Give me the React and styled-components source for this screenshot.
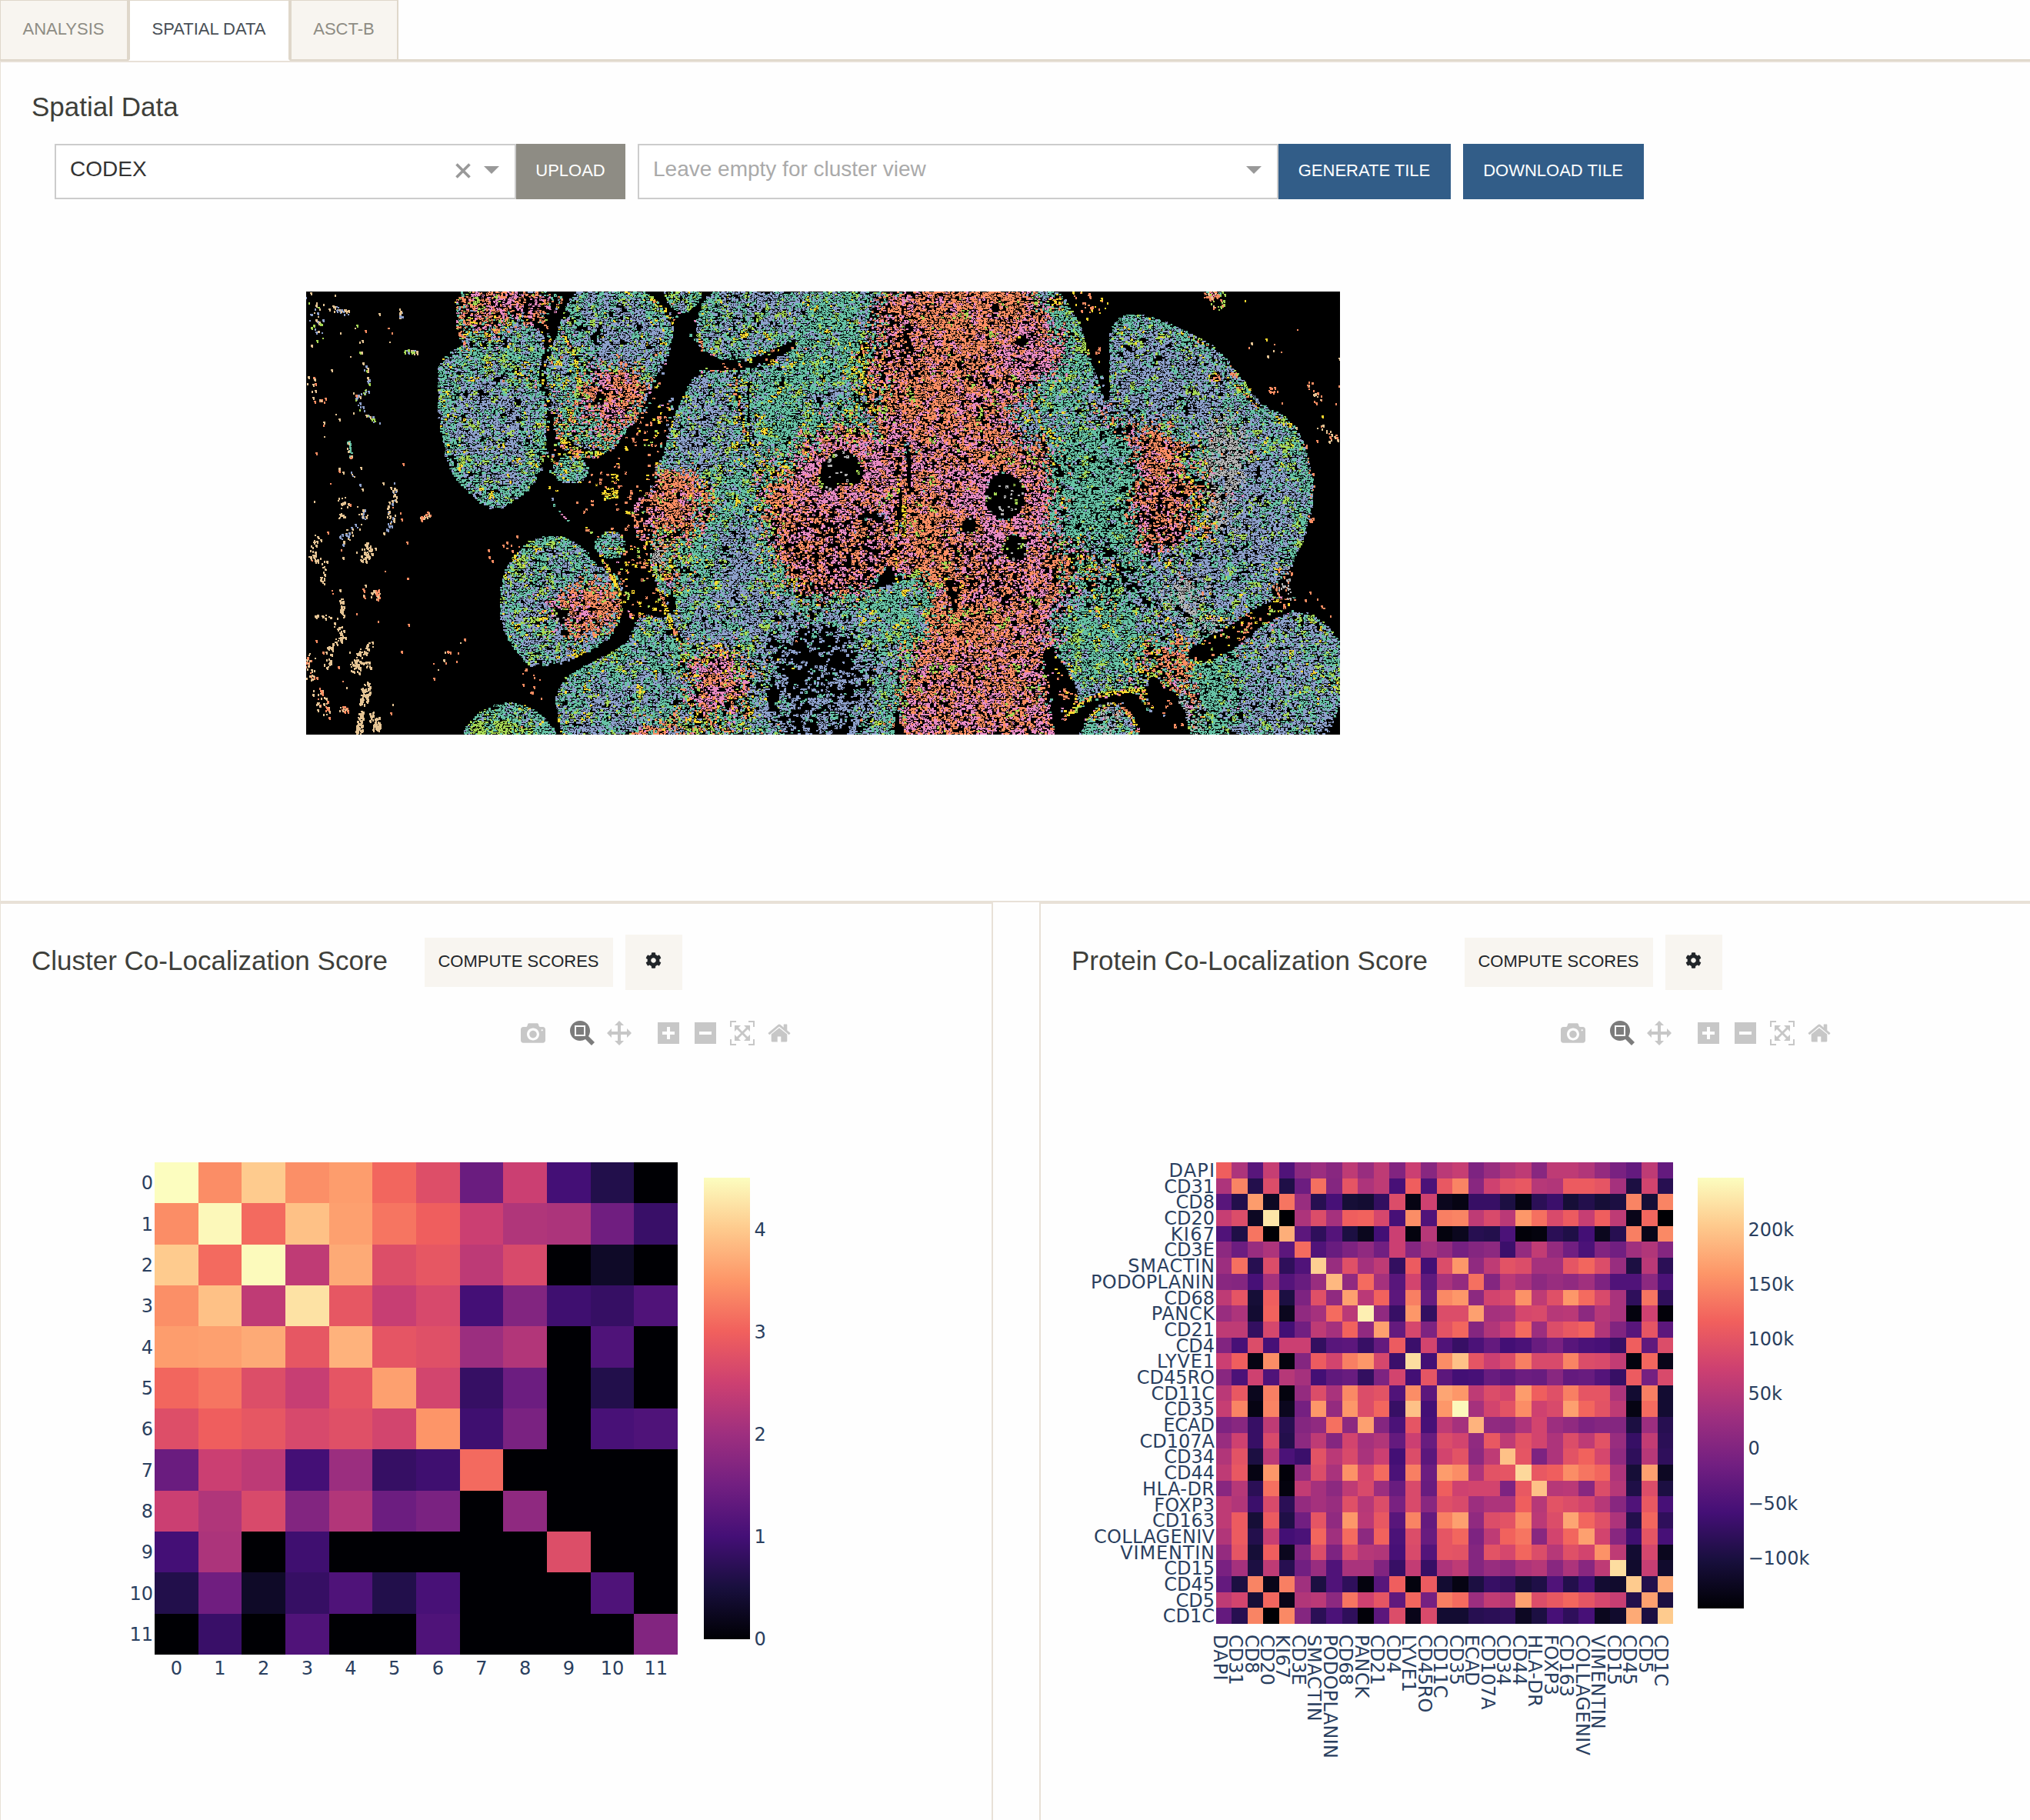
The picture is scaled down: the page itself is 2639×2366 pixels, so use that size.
import React, { useLayoutEffect, useRef } from "react";
import styled, { createGlobalStyle, css } from "styled-components";
import { FaCog } from "react-icons/fa";

const GlobalStyle = createGlobalStyle`
  * { box-sizing: border-box; }
  html, body { margin: 0; padding: 0; background: #fff; }
  body {
    font-family: "Liberation Sans", Arial, Helvetica, sans-serif;
    font-size: 28px;
    color: #3e3f3a;
  }
  button { font-family: inherit; }
`;

/* ---------- layout ---------- */

const Page = styled.div`
  width: 2639px;
  height: 2366px;
  overflow: hidden;
  background: #fefefe;
`;

const Shell = styled.div`
  width: 2645px;
  margin: -1px 0 0 -1px;
`;

const TabBar = styled.nav`
  display: flex;
  height: 80px;
  border-bottom: 2px solid #dfd7ca;
`;

const Tab = styled.button`
  width: ${(p) => p.$width}px;
  height: 80px;
  padding: 0 1px 3px 0;
  border: 2px solid #dfd7ca;
  border-bottom-color: ${(p) => (p.$active ? "#fff" : "#dfd7ca")};
  background: ${(p) => (p.$active ? "#fff" : "#f8f5f0")};
  color: ${(p) => (p.$active ? "#495057" : "#8e8c84")};
  font-size: 22px;
  text-transform: uppercase;
  white-space: nowrap;
`;

const Card = styled.section`
  width: ${(p) => p.$width}px;
  height: ${(p) => p.$height}px;
  border: 2px solid #e8e1d7;
  background: #fefefe;
`;

const CardRow = styled.div`
  display: flex;
  gap: 60px;
`;

const Title = styled.h2`
  margin: 0;
  font-size: 35px;
  line-height: 42px;
  font-weight: 400;
  color: #3e3f3a;
  white-space: nowrap;
`;

const SpatialTitle = styled(Title)`
  padding: 37px 0 0 40px;
`;

const Controls = styled.div`
  display: flex;
  height: 72px;
  margin: 27px 0 0 70px;
`;

const Select = styled.div`
  display: flex;
  align-items: center;
  width: ${(p) => p.$width}px;
  height: 72px;
  margin-left: ${(p) => p.$offset || 0}px;
  padding: 0 20px 0 18px;
  border: 2px solid #ccc;
  background: #fff;
`;

const SelectText = styled.span`
  flex: 1;
  padding-bottom: 7px;
  font-size: 28px;
  color: ${(p) => (p.$placeholder ? "#aaa" : "#333")};
`;

const ClearIcon = styled.svg`
  width: 20px;
  height: 20px;
  margin: 0 17px 2px 0;
  fill: none;
  stroke: #999;
  stroke-width: 3.6;
`;

const Caret = styled.span`
  width: 0;
  height: 0;
  margin-bottom: 4px;
  border: 10px solid transparent;
  border-top-color: #999;
  border-bottom-width: 0;
`;

const buttonTone = {
  secondary: css`background: #8e8c84; color: #fff;`,
  primary: css`background: #325d88; color: #fff;`,
  light: css`background: #f8f5f0; color: #212529;`,
};

const Button = styled.button`
  display: flex;
  align-items: center;
  justify-content: center;
  width: ${(p) => p.$width}px;
  height: ${(p) => p.$height || 72}px;
  margin-left: ${(p) => p.$offset || 0}px;
  padding: 0 1px ${(p) => p.$lift || 3}px 0;
  border: 0;
  font-size: 22px;
  text-transform: uppercase;
  white-space: nowrap;
  ${(p) => buttonTone[p.$tone]}
`;

const TissueCanvas = styled.canvas`
  display: block;
  width: 1344px;
  height: 576px;
  margin: 120px 0 0 397px;
  background: #000;
`;

const ScoreHeader = styled.header`
  display: flex;
  align-items: center;
  height: 72px;
  margin: 40px 0 0 40px;
`;

const ScoreTitle = styled(Title)`
  width: 511px;
  padding-bottom: 5px;
`;

const ModeBar = styled.div`
  display: flex;
  gap: 32px;
  margin: 40px 0 0 676px;
`;

const ModeGroup = styled.div`
  display: flex;
  gap: 16px;
`;

const ModeIcon = styled.svg`
  display: block;
  width: 32px;
  height: 32px;
  fill: ${(p) => (p.$active ? "#7c7c7c" : "#c7c7c7")};
`;

const Chart = styled.svg`
  display: block;
  width: 1286px;
  height: 1000px;
  font-family: "DejaVu Sans", Verdana, sans-serif;
  font-size: 24px;
  fill: #2a3f5f;
`;

/* ---------- tissue image ---------- */

const COLORS = {
  T: "#66c2a5", O: "#fc8d62", B: "#8da0cb", P: "#e78ac3",
  L: "#a6d854", Y: "#ffd92f", N: "#e5c494", G: "#b3b3b3",
};

/* fill: share of the area covered by cells; clump: how much the gaps cluster */
const TISSUE = {
  none: { fill: 0, clump: 0, mix: "N" },
  follicle: { fill: 0.83, clump: 0.75, mix: "TTTTTTBBBBBBLLTTTTTTBBBBBLYBB" },
  blue: { fill: 0.8, clump: 0.8, mix: "BBBBBBBBBTTBBBBBBBTTLL" },
  teal: { fill: 0.9, clump: 0.7, mix: "TTTTTTTTTTBLLBTTTTTTTTTTLBBY" },
  orange: { fill: 0.78, clump: 0.4, mix: "OOOOOOOOPPOOOOOOOPL" },
  pink: { fill: 0.76, clump: 0.4, mix: "PPPPPPPOOO" },
  warm: { fill: 0.7, clump: 0.4, mix: "OOOOOPPPPPOOOOOPPPPL" },
  darkWarm: { fill: 0.54, clump: 0.4, mix: "OOOOOPPPP" },
  edge: { fill: 0.72, clump: 0.4, mix: "TTTTOOOLLYYBP" },
  stroma: { fill: 0.26, clump: 0.5, mix: "OOOOOYYYL" },
  sparse: { fill: 0.12, clump: 0.5, mix: "OOOOOOOY" },
  yellow: { fill: 0.66, clump: 0.4, mix: "YYYYYOLO" },
  gray: { fill: 0.84, clump: 0.4, mix: "GGGGGGGGTB" },
  darkTeal: { fill: 0.74, clump: 0.55, mix: "TTTTTTTTTTTTBTTTL" },
  darkBlue: { fill: 0.5, clump: 0.7, mix: "BBBBBBBTTBBB" },
  deepBlue: { fill: 0.3, clump: 0.7, mix: "BBBBBBBT" },
  green: { fill: 0.9, clump: 0.6, mix: "LLLLLLT" },
  hole: { fill: 0.03, clump: 0, mix: "GL" },
};
const TISSUE_KEYS = Object.keys(TISSUE);
const CRISP = new Set(["hole", "yellow", "stroma", "sparse", "green"]);
const LOOSE = new Set(["none", "hole", "stroma", "sparse", "yellow"]);

const LEFT = [1 / 2.24, 0, 0, 1 / 2.57, -18, -19];
const RIGHT = [1 / 2.24, 0, 0, 1 / 2.57, 662, -19];

/* [field, kind, shape, geometry, line width] painted back to front */
const REGIONS = [
  [LEFT, "stroma", "area", [735, 420, 760, 600, 880, 600, 1000, 480, 1120, 330, 1100, 480, 1050, 620, 1060, 900, 1110, 1180, 980, 1180, 940, 900, 880, 860, 800, 820, 745, 740]],
  [LEFT, "sparse", "area", [770, 660, 850, 610, 1000, 520, 1040, 600, 1010, 820, 900, 860, 780, 800]],
  [LEFT, "sparse", "area", [1110, 110, 1180, 120, 1170, 260, 1130, 350, 1060, 480, 1020, 460, 1090, 300]],
  [LEFT, "none", "area", [1100, 150, 1180, 200, 1200, 300, 1150, 330, 1090, 440, 1040, 420, 1090, 300]],
  [LEFT, "stroma", "line", [1190, 300, 1300, 300, 1420, 250, 1520, 185], 30],
  [LEFT, "edge", "area", [470, 49, 800, 49, 770, 110, 735, 160, 690, 150, 610, 185, 560, 205, 485, 235, 478, 130]],
  [LEFT, "warm", "area", [485, 30, 680, 30, 700, 110, 620, 150, 530, 150, 490, 110]],
  [LEFT, "darkWarm", "area", [640, 60, 780, 60, 750, 140, 640, 150]],
  [LEFT, "follicle", "area", [425, 290, 475, 235, 560, 200, 620, 180, 690, 145, 740, 195, 735, 260, 722, 330, 738, 420, 742, 560, 728, 630, 703, 695, 652, 745, 595, 782, 542, 755, 497, 703, 456, 642, 436, 540, 421, 430, 421, 340]],
  [LEFT, "teal", "line", [450, 290, 438, 430, 455, 540, 475, 630, 515, 700, 560, 745, 600, 757, 650, 725, 695, 665, 720, 600, 724, 450], 30],
  [LEFT, "teal", "area", [470, 250, 600, 200, 700, 300, 720, 380, 600, 300, 480, 300]],
  [LEFT, "blue", "oval", [590, 460, 110, 120]],
  [LEFT, "yellow", "line", [640, 310, 700, 350], 7],
  [LEFT, "follicle", "area", [780, 130, 830, 30, 1020, 30, 1080, 110, 1115, 180, 1095, 260, 1055, 340, 1035, 400, 995, 480, 930, 575, 880, 610, 820, 600, 770, 565, 760, 480, 742, 420, 736, 340, 750, 250, 775, 180]],
  [LEFT, "blue", "oval", [950, 180, 100, 90]],
  [LEFT, "teal", "line", [900, 60, 1010, 60, 1085, 160], 24],
  [LEFT, "orange", "area", [850, 320, 920, 280, 1010, 310, 1035, 370, 1010, 440, 930, 550, 880, 540, 850, 480, 840, 400]],
  [LEFT, "pink", "oval", [905, 460, 50, 40]],
  [LEFT, "pink", "oval", [910, 330, 40, 34]],
  [LEFT, "edge", "area", [760, 420, 850, 450, 900, 540, 900, 600, 820, 600, 765, 560]],
  [LEFT, "teal", "oval", [850, 520, 40, 40]],
  [LEFT, "yellow", "line", [780, 540, 830, 580, 900, 590], 14],
  [LEFT, "yellow", "line", [790, 190, 825, 270, 838, 400], 12],
  [LEFT, "none", "line", [780, 90, 835, 180, 850, 150], 8],
  [LEFT, "none", "line", [770, 60, 745, 150, 742, 220, 724, 330, 745, 420, 755, 540, 745, 640], 14],
  [LEFT, "yellow", "line", [735, 140, 750, 220, 728, 340, 748, 450], 5],
  [LEFT, "hole", "oval", [895, 405, 16, 24]],
  [LEFT, "follicle", "oval", [810, 645, 50, 46]],
  [LEFT, "teal", "oval", [810, 645, 44, 40]],
  [LEFT, "yellow", "oval", [925, 725, 22, 20]],
  [LEFT, "yellow", "oval", [935, 672, 15, 14]],
  [LEFT, "yellow", "line", [970, 575, 1005, 520], 8],
  [LEFT, "teal", "area", [1080, 30, 1200, 30, 1170, 110, 1130, 120, 1090, 90]],
  [LEFT, "yellow", "line", [1040, 70, 1085, 110, 1105, 150], 12],
  [LEFT, "follicle", "area", [1215, 20, 1640, 20, 1600, 110, 1510, 170, 1420, 232, 1330, 276, 1240, 278, 1180, 235, 1170, 160]],
  [LEFT, "blue", "area", [1230, 50, 1500, 60, 1480, 130, 1380, 180, 1240, 170]],
  [LEFT, "yellow", "line", [1182, 190, 1195, 240], 12],
  [LEFT, "follicle", "area", [1180, 320, 1300, 315, 1400, 285, 1520, 200, 1620, 120, 1640, 1600, 800, 1600, 770, 1460, 765, 1400, 790, 1340, 850, 1300, 940, 1250, 990, 1200, 1010, 1120, 1110, 1150, 1120, 1050, 1040, 1000, 1050, 880, 1030, 800, 1050, 660, 1080, 600, 1090, 530, 1120, 440, 1150, 370]],
  [LEFT, "blue", "area", [1150, 420, 1200, 340, 1270, 400, 1280, 680, 1200, 660, 1140, 590]],
  [LEFT, "teal", "area", [1180, 720, 1260, 680, 1340, 560, 1340, 820, 1300, 900, 1200, 1000, 1130, 960]],
  [LEFT, "blue", "area", [1230, 820, 1340, 780, 1370, 980, 1330, 1160, 1240, 1130, 1220, 950]],
  [LEFT, "teal", "area", [1340, 330, 1600, 150, 1620, 480, 1500, 590, 1380, 600, 1345, 520]],
  [LEFT, "edge", "area", [1040, 640, 1200, 640, 1200, 800, 1130, 900, 1100, 1100, 1040, 1000]],
  [LEFT, "orange", "oval", [1115, 750, 74, 110]],
  [LEFT, "gray", "oval", [1065, 930, 18, 36]],
  [LEFT, "darkWarm", "area", [980, 760, 1050, 700, 1060, 860, 1010, 900]],
  [LEFT, "yellow", "line", [1290, 330, 1300, 430, 1325, 540, 1360, 600], 10],
  [LEFT, "none", "line", [1330, 330, 1328, 480, 1350, 570], 5],
  [LEFT, "yellow", "line", [1075, 1060, 1095, 1140, 1130, 1220], 14],
  [LEFT, "edge", "area", [1350, 640, 1450, 580, 1640, 540, 1640, 1090, 1440, 1080, 1370, 900]],
  [LEFT, "orange", "area", [1370, 680, 1640, 560, 1640, 1060, 1460, 1050, 1400, 900]],
  [LEFT, "darkWarm", "area", [1400, 820, 1480, 760, 1640, 760, 1640, 1070, 1500, 1070, 1430, 960]],
  [LEFT, "teal", "line", [800, 1400, 860, 1330, 960, 1270, 1040, 1190], 44],
  [LEFT, "edge", "area", [1130, 1220, 1330, 1230, 1350, 1528, 1140, 1528]],
  [LEFT, "pink", "oval", [1230, 1350, 68, 100]],
  [LEFT, "darkBlue", "area", [1380, 1100, 1640, 1170, 1640, 1600, 1430, 1540, 1350, 1350]],
  [LEFT, "deepBlue", "area", [1470, 1210, 1640, 1220, 1640, 1400, 1500, 1370]],
  [LEFT, "orange", "oval", [1065, 1520, 70, 26]],
  [LEFT, "follicle", "area", [602, 1100, 612, 995, 645, 925, 700, 872, 790, 862, 845, 905, 893, 975, 945, 985, 965, 1060, 955, 1155, 903, 1225, 822, 1277, 720, 1306, 676, 1292, 634, 1224, 608, 1170]],
  [LEFT, "teal", "line", [640, 1000, 700, 900, 780, 885, 840, 950], 36],
  [LEFT, "teal", "line", [670, 1250, 720, 1280, 820, 1250], 20],
  [LEFT, "orange", "area", [770, 1060, 880, 980, 945, 1050, 940, 1150, 890, 1210, 800, 1200, 750, 1120]],
  [LEFT, "pink", "oval", [790, 1115, 44, 50]],
  [LEFT, "hole", "oval", [782, 1125, 26, 26]],
  [LEFT, "hole", "oval", [795, 1190, 16, 12]],
  [LEFT, "follicle", "oval", [925, 895, 44, 46]],
  [LEFT, "yellow", "line", [900, 930, 935, 1010, 965, 1090], 14],
  [LEFT, "teal", "area", [480, 1600, 490, 1528, 540, 1450, 630, 1418, 705, 1440, 775, 1528, 790, 1600]],
  [LEFT, "green", "oval", [600, 1515, 76, 30]],

  [RIGHT, "follicle", "area", [-60, 20, 700, 20, 740, 110, 770, 150, 800, 280, 840, 420, 860, 430, 852, 200, 875, 135, 930, 118, 1045, 160, 1158, 225, 1208, 286, 1256, 366, 1296, 425, 1378, 472, 1426, 555, 1452, 700, 1436, 832, 1404, 924, 1362, 1002, 1310, 1060, 1380, 1075, 1380, 1120, 1460, 1135, 1560, 1260, 1560, 1360, 1480, 1540, 1480, 1600, 400, 1600, 400, 1000, 200, 900, 100, 500, -60, 300]],
  [RIGHT, "teal", "area", [-60, 49, 140, 30, 130, 300, 170, 430, 60, 500, -60, 480]],
  [RIGHT, "blue", "oval", [30, 400, 50, 60]],
  [RIGHT, "edge", "area", [110, 200, 200, 180, 230, 420, 170, 560, 100, 520]],
  [RIGHT, "warm", "area", [150, 20, 680, 20, 745, 260, 620, 350, 560, 480, 640, 560, 690, 650, 700, 850, 680, 1100, 700, 1200, 640, 1600, 230, 1600, 250, 1200, 370, 1100, 370, 1040, 240, 1000, 200, 950, 170, 560, 190, 350]],
  [RIGHT, "orange", "area", [240, 49, 540, 20, 520, 180, 440, 280, 420, 480, 230, 500, 220, 350, 260, 230]],
  [RIGHT, "orange", "area", [340, 40, 640, 20, 640, 110, 480, 200, 360, 120]],
  [RIGHT, "pink", "area", [560, 160, 700, 200, 745, 270, 620, 350, 540, 260]],
  [RIGHT, "darkWarm", "area", [160, 60, 240, 60, 350, 320, 230, 330, 180, 200]],
  [RIGHT, "edge", "area", [-40, 480, 170, 460, 200, 560, -40, 560]],
  [RIGHT, "pink", "area", [-60, 560, 120, 500, 240, 600, 240, 760, 60, 820, -80, 760]],
  [RIGHT, "darkWarm", "area", [-80, 780, 60, 790, 230, 820, 190, 1060, -60, 1090]],
  [RIGHT, "teal", "area", [-40, 1110, 60, 1060, 200, 1040, 260, 1000, 370, 1040, 360, 1190, 240, 1210, 230, 1600, 160, 1600, 120, 1170]],
  [RIGHT, "follicle", "area", [-80, 1120, 140, 1090, 240, 1180, 200, 1360, 170, 1600, -80, 1600]],
  [RIGHT, "darkBlue", "area", [-80, 1160, 100, 1160, 170, 1260, 150, 1460, 100, 1600, -80, 1600]],
  [RIGHT, "deepBlue", "area", [-80, 1190, 70, 1180, 130, 1270, 40, 1360, -80, 1370]],
  [RIGHT, "orange", "area", [260, 780, 400, 600, 470, 900, 520, 1100, 620, 1180, 300, 1300, 360, 1060, 270, 960]],
  [RIGHT, "pink", "area", [380, 640, 480, 560, 640, 640, 690, 760, 690, 1060, 600, 1000, 480, 930, 380, 800]],
  [RIGHT, "orange", "oval", [530, 600, 80, 50]],
  [RIGHT, "darkWarm", "area", [340, 850, 460, 900, 640, 1060, 600, 1120, 460, 1080, 400, 980]],
  [RIGHT, "orange", "oval", [590, 1380, 80, 110]],
  [RIGHT, "pink", "oval", [640, 1250, 40, 80]],
  [RIGHT, "teal", "area", [640, 60, 720, 90, 775, 180, 800, 290, 850, 440, 700, 480, 620, 420, 660, 330, 745, 260]],
  [RIGHT, "yellow", "oval", [700, 80, 20, 20]],
  [RIGHT, "blue", "area", [740, 330, 790, 300, 840, 430, 790, 480]],
  [RIGHT, "darkTeal", "area", [680, 500, 900, 470, 930, 700, 900, 850, 960, 950, 960, 1150, 720, 1150, 720, 900, 690, 700]],
  [RIGHT, "darkWarm", "area", [640, 860, 720, 860, 740, 1080, 680, 1140]],
  [RIGHT, "edge", "area", [700, 880, 820, 900, 880, 1080, 760, 1110]],
  [RIGHT, "darkWarm", "area", [900, 480, 990, 470, 1080, 640, 1120, 800, 1040, 930, 900, 900, 930, 720]],
  [RIGHT, "orange", "oval", [1000, 600, 52, 110]],
  [RIGHT, "edge", "area", [1040, 500, 1130, 600, 1150, 860, 1060, 900, 1090, 700]],
  [RIGHT, "none", "line", [650, 520, 680, 600, 720, 660], 10],
  [RIGHT, "yellow", "line", [645, 360, 640, 430, 665, 540, 690, 620, 725, 780], 6],
  [RIGHT, "darkBlue", "line", [790, 900, 900, 1000, 960, 1080], 40],
  [RIGHT, "blue", "area", [890, 200, 950, 150, 1080, 220, 1180, 300, 1220, 400, 1180, 490, 1060, 480, 920, 470, 870, 380]],
  [RIGHT, "blue", "area", [1220, 620, 1290, 560, 1390, 640, 1410, 780, 1370, 920, 1270, 1030, 1180, 960, 1160, 860]],
  [RIGHT, "teal", "line", [880, 160, 930, 140, 1040, 180, 1140, 240, 1190, 300], 20],
  [RIGHT, "teal", "line", [1290, 450, 1360, 490, 1410, 580, 1430, 700, 1415, 820, 1380, 920], 34],
  [RIGHT, "yellow", "line", [1090, 200, 1150, 235], 8],
  [RIGHT, "yellow", "line", [1225, 360, 1285, 430], 10],
  [RIGHT, "yellow", "oval", [1165, 335, 12, 20]],
  [RIGHT, "gray", "area", [1130, 460, 1165, 470, 1250, 540, 1240, 620, 1205, 740, 1205, 870, 1150, 830, 1135, 600]],
  [RIGHT, "blue", "area", [980, 1000, 1080, 880, 1200, 900, 1200, 1050, 1080, 1080, 980, 1100]],
  [RIGHT, "gray", "oval", [1070, 1060, 50, 60]],
  [RIGHT, "gray", "oval", [1150, 1150, 40, 20]],
  [RIGHT, "teal", "oval", [840, 1220, 130, 120]],
  [RIGHT, "edge", "area", [890, 1320, 970, 1200, 1090, 1190, 1100, 1400, 1150, 1600, 1040, 1600, 960, 1380]],
  [RIGHT, "orange", "area", [970, 1210, 1070, 1210, 1090, 1380, 1040, 1350, 980, 1280]],
  [RIGHT, "none", "area", [970, 1320, 1010, 1350, 1050, 1450, 1100, 1600, 940, 1600, 960, 1420]],
  [RIGHT, "sparse", "area", [1000, 1340, 1060, 1400, 1110, 1600, 1030, 1600]],
  [RIGHT, "darkTeal", "area", [1100, 1220, 1240, 1220, 1220, 1400, 1200, 1600, 1110, 1600]],
  [RIGHT, "stroma", "area", [1060, 1250, 1200, 1170, 1310, 1080, 1400, 1060, 1400, 1120, 1310, 1150, 1230, 1240, 1120, 1300]],
  [RIGHT, "gray", "line", [1060, 1330, 1080, 1440, 1100, 1528], 14],
  [RIGHT, "blue", "area", [1250, 1250, 1330, 1150, 1425, 1108, 1510, 1175, 1535, 1280, 1500, 1440, 1470, 1600, 1200, 1600, 1220, 1400]],
  [RIGHT, "follicle", "oval", [1450, 1320, 80, 150]],
  [RIGHT, "none", "area", [660, 1230, 700, 1240, 720, 1360, 760, 1430, 860, 1390, 940, 1390, 980, 1440, 1010, 1600, 640, 1600]],
  [RIGHT, "warm", "area", [560, 1230, 650, 1200, 670, 1400, 690, 1480, 700, 1600, 540, 1600]],
  [RIGHT, "stroma", "area", [655, 1230, 690, 1240, 750, 1340, 770, 1420, 720, 1500, 680, 1420]],
  [RIGHT, "none", "line", [690, 1340, 705, 1460], 30],
  [RIGHT, "yellow", "line", [740, 1460, 790, 1410, 860, 1390, 940, 1380, 975, 1440], 14],
  [RIGHT, "teal", "area", [740, 1600, 790, 1480, 820, 1440, 880, 1424, 915, 1450, 940, 1520, 960, 1600]],
  [RIGHT, "gray", "oval", [850, 1465, 50, 24]],
  [RIGHT, "yellow", "line", [790, 1480, 830, 1436, 885, 1425, 920, 1470, 945, 1540], 10],
  [RIGHT, "none", "line", [270, 560, 272, 720], 10],
  [RIGHT, "none", "line", [245, 700, 240, 850], 14],
  [RIGHT, "yellow", "line", [256, 740, 256, 860], 14],
  [RIGHT, "yellow", "line", [236, 540, 242, 700, 232, 860, 236, 1010], 4],
  [RIGHT, "yellow", "line", [135, 210, 142, 340, 160, 440], 8],
  [RIGHT, "hole", "area", [25, 620, 50, 580, 90, 575, 125, 610, 138, 660, 130, 695, 70, 690, 50, 715, 0, 705]],
  [RIGHT, "hole", "oval", [550, 732, 60, 78]],
  [RIGHT, "hole", "oval", [445, 830, 24, 30]],
  [RIGHT, "hole", "oval", [580, 905, 38, 44]],
  [RIGHT, "hole", "oval", [600, 215, 22, 18]],
  [RIGHT, "darkWarm", "oval", [335, 90, 34, 34]],
  [RIGHT, "hole", "oval", [525, 98, 10, 14]],
  [RIGHT, "none", "line", [385, 1010, 405, 1110], 18],
  [RIGHT, "yellow", "line", [355, 1000, 430, 1030, 410, 1060], 8],
  [RIGHT, "stroma", "line", [820, 240, 825, 340, 850, 430], 14],
  [RIGHT, "darkWarm", "line", [845, 430, 880, 500], 30],
  [RIGHT, "orange", "oval", [1152, 60, 28, 12]],
];

/* speckled debris trails: field, colours, spread, count, polyline */
const TRAILS = [
  [LEFT, "NNBL", 16, 26, [50, 60, 80, 200]],
  [LEFT, "NB", 8, 18, [110, 95, 155, 120]],
  [LEFT, "NBL", 7, 44, [185, 160, 215, 300, 220, 380, 185, 400, 210, 460, 250, 480]],
  [LEFT, "NO", 10, 14, [50, 330, 60, 400, 100, 420]],
  [LEFT, "NT", 4, 18, [160, 545, 170, 605]],
  [LEFT, "NB", 10, 40, [180, 640, 200, 780, 210, 810, 170, 850, 140, 885]],
  [LEFT, "N", 10, 18, [140, 740, 150, 765, 135, 820]],
  [LEFT, "NN", 8, 40, [75, 850, 55, 930, 95, 960, 85, 1025]],
  [LEFT, "BN", 7, 34, [290, 690, 298, 740, 275, 780, 290, 810, 262, 870]],
  [LEFT, "N", 11, 34, [228, 895, 205, 945]],
  [LEFT, "NO", 6, 22, [212, 1015, 210, 1070, 246, 1040, 250, 1070]],
  [LEFT, "N", 5, 26, [143, 1070, 143, 1135, 60, 1130]],
  [LEFT, "N", 8, 48, [130, 1160, 145, 1210, 105, 1235, 100, 1310]],
  [LEFT, "N", 12, 60, [230, 1225, 190, 1260, 180, 1310, 220, 1290]],
  [LEFT, "N", 10, 54, [215, 1360, 205, 1420]],
  [LEFT, "NNO", 14, 60, [50, 1260, 45, 1290, 60, 1360, 85, 1420, 90, 1460]],
  [LEFT, "N", 7, 54, [200, 1450, 190, 1525]],
  [LEFT, "N", 9, 40, [225, 1460, 250, 1490, 240, 1510]],
  [LEFT, "NO", 8, 12, [140, 1440, 160, 1440]],
  [LEFT, "BNL", 4, 14, [325, 245, 358, 248]],
  [LEFT, "NB", 4, 8, [312, 100, 316, 140]],
  [LEFT, "NO", 5, 14, [365, 810, 402, 788]],
  [LEFT, "ON", 30, 10, [390, 1370, 460, 1280, 480, 1240]],
  [LEFT, "O", 24, 10, [570, 940, 620, 880, 650, 900]],
  [LEFT, "O", 20, 10, [680, 1310, 720, 1410]],
  [LEFT, "NO", 120, 60, [150, 100, 200, 800, 200, 1500]],
  [RIGHT, "OOY", 30, 24, [760, 60, 840, 120]],
  [RIGHT, "ONL", 14, 22, [1130, 55, 1180, 60, 1160, 105]],
  [RIGHT, "ON", 10, 14, [1440, 350, 1450, 380, 1462, 410]],
  [RIGHT, "NO", 14, 18, [1470, 500, 1505, 530, 1505, 550]],
  [RIGHT, "O", 8, 8, [1320, 370, 1340, 380]],
  [RIGHT, "O", 6, 6, [1220, 330, 1205, 300]],
  [RIGHT, "ONY", 90, 14, [1250, 140, 1400, 260, 1480, 480]],
  [RIGHT, "OG", 24, 30, [1370, 980, 1350, 1040, 1380, 1060]],
  [RIGHT, "O", 8, 16, [1425, 560, 1448, 700, 1440, 820]],
  [RIGHT, "O", 14, 6, [1520, 1135, 1430, 1060]],
];

const hash = (x, y, s) => {
  let h = Math.imul(x | 0, 374761393) ^ Math.imul(y | 0, 668265263) ^ Math.imul(s, 1274126177);
  h = Math.imul(h ^ (h >>> 13), 1103515245);
  h = Math.imul(h ^ (h >>> 15), 2246822519);
  return ((h ^ (h >>> 16)) >>> 0) / 4294967296;
};

const smoothNoise = (x, y, s) => {
  const x0 = Math.floor(x), y0 = Math.floor(y);
  const u = x - x0, v = y - y0;
  const a = hash(x0, y0, s), b = hash(x0 + 1, y0, s);
  const c = hash(x0, y0 + 1, s), d = hash(x0 + 1, y0 + 1, s);
  return a + (b - a) * u + (c - a) * v + (a - b - c + d) * u * v;
};

const tracePath = (ctx, pts, closed) => {
  const n = pts.length / 2;
  const at = (i) => [pts[(i % n) * 2], pts[(i % n) * 2 + 1]];
  ctx.beginPath();
  if (!closed) {
    ctx.moveTo(...at(0));
    for (let i = 1; i < n; i++) ctx.lineTo(...at(i));
    return;
  }
  const mid = (i) => {
    const [ax, ay] = at(i), [bx, by] = at(i + 1);
    return [(ax + bx) / 2, (ay + by) / 2];
  };
  ctx.moveTo(...mid(0));
  for (let i = 1; i <= n; i++) ctx.quadraticCurveTo(...at(i), ...mid(i));
  ctx.closePath();
};

const regionMap = (w, h) => {
  const map = document.createElement("canvas");
  map.width = w;
  map.height = h;
  const ctx = map.getContext("2d", { willReadFrequently: true });
  ctx.lineJoin = "round";
  ctx.lineCap = "round";
  ctx.fillStyle = "#000";
  ctx.fillRect(0, 0, w, h);
  REGIONS.forEach(([field, kind, shape, geo, width]) => {
    const tone = `rgb(${TISSUE_KEYS.indexOf(kind) * 10},0,0)`;
    ctx.setTransform(...field);
    ctx.fillStyle = tone;
    ctx.strokeStyle = tone;
    if (shape === "oval") {
      ctx.beginPath();
      ctx.ellipse(geo[0], geo[1], geo[2], geo[3], 0, 0, Math.PI * 2);
      ctx.fill();
    } else if (shape === "area") {
      tracePath(ctx, geo, true);
      ctx.fill();
    } else {
      ctx.lineWidth = width;
      tracePath(ctx, geo, false);
      ctx.stroke();
    }
  });
  return ctx.getImageData(0, 0, w, h).data;
};

const paintTissue = (canvas) => {
  const w = canvas.width, h = canvas.height;
  const ctx = canvas.getContext("2d");
  ctx.setTransform(1, 0, 0, 1, 0, 0);
  ctx.fillStyle = "#000";
  ctx.fillRect(0, 0, w, h);
  const map = regionMap(w, h);
  const kindAt = (x, y) => {
    const cx = Math.max(0, Math.min(w - 1, x | 0));
    const cy = Math.max(0, Math.min(h - 1, y | 0));
    return TISSUE_KEYS[Math.round(map[(cy * w + cx) * 4] / 10)] || "none";
  };
  const step = 3;
  for (let y = 0; y < h; y += step) {
    for (let x = 0; x < w; x += step) {
      const own = kindAt(x + 1, y + 1);
      if (own === "none") continue;
      let kind = own;
      if (!CRISP.has(own)) {
        const reach = 44;
        const dx = hash(x, y, 1) + hash(x, y, 14) - 1;
        const dy = hash(x, y, 2) + hash(x, y, 15) - 1;
        const wx = (smoothNoise(x / 14, y / 14, 16) - 0.5) * 26;
        const wy = (smoothNoise(x / 14, y / 14, 17) - 0.5) * 26;
        const near = kindAt(x + dx * reach * 0.5 + wx, y + dy * reach * 0.5 + wy);
        if (!LOOSE.has(near)) kind = near;
      }
      const { fill, clump, mix } = TISSUE[kind];
      /* the averaged noise is bell shaped, so steer its threshold from the coverage */
      const noise = smoothNoise(x / 5.5, y / 5.5, 3) * clump + hash(x, y, 4) * (1 - clump);
      const level = 0.5 + (fill - 0.5) * (fill > 0.5 ? 0.78 : 0.86);
      if (noise > level) continue;
      const grouped = hash(x, y, 5) < 0.62;
      const jx = Math.floor((x + hash(x, y, 6) * 5) / 9);
      const jy = Math.floor((y + hash(x, y, 7) * 5) / 9);
      const pick = grouped
        ? hash(jx, jy, 8)
        : hash(x, y, 9);
      ctx.fillStyle = COLORS[mix[Math.floor(pick * mix.length)]];
      const bw = 3 + Math.floor(hash(x, y, 10) * 1.6);
      const bh = 2 + Math.floor(hash(x, y, 11) * 2.6);
      const ox = Math.floor(hash(x, y, 12) * 1.6), oy = Math.floor(hash(x, y, 13) * 1.6);
      ctx.fillRect(x + ox, y + oy, bw, bh);
    }
  }
  ctx.fillStyle = "#000";
  for (let y = 0; y < h; y++) {
    for (let x = 0; x < w; x++) {
      if (hash(x, y, 20) < 0.12) ctx.fillRect(x, y, 1, 1);
    }
  }
  TRAILS.forEach(([field, mix, spread, count, pts], t) => {
    const segs = pts.length / 2 - 1;
    const total = Math.round(count * 1.15);
    for (let i = 0; i < total; i++) {
      const pos = hash(i, t, 35) * segs;
      const s = Math.min(segs - 1, Math.floor(pos)), f = pos - s;
      const px = pts[s * 2] + (pts[s * 2 + 2] - pts[s * 2]) * f;
      const py = pts[s * 2 + 1] + (pts[s * 2 + 3] - pts[s * 2 + 1]) * f;
      const fx = px + (hash(i, t, 30) - 0.5) * 2.4 * spread;
      const fy = py + (hash(i, t, 31) - 0.5) * 2.4 * spread;
      const x = Math.round(fx * field[0] + field[4]);
      const y = Math.round(fy * field[3] + field[5]);
      ctx.fillStyle = COLORS[mix[Math.floor(hash(i, t, 32) * mix.length)]];
      const size = hash(i, t, 33);
      ctx.fillRect(x, y, 2 + Math.floor(size * 2), 2 + Math.floor(hash(i, t, 34) * 2));
      if (size > 0.55) ctx.fillRect(x + 1, y + 2, 2, 2);
    }
  });
};

function TissueImage() {
  const ref = useRef(null);
  useLayoutEffect(() => paintTissue(ref.current), []);
  return <TissueCanvas ref={ref} width={1344} height={576} />;
}

/* ---------- heatmaps ---------- */

const MAGMA = [
  [0, 0, 4], [24, 15, 61], [68, 15, 118], [114, 31, 129], [158, 47, 127],
  [205, 64, 113], [241, 96, 93], [253, 150, 104], [254, 202, 141], [252, 253, 191],
];

const magma = (t) => {
  const p = Math.max(0, Math.min(1, t)) * 9;
  const i = Math.min(8, Math.floor(p));
  const f = p - i;
  const c = MAGMA[i].map((v, k) => Math.round(v + (MAGMA[i + 1][k] - v) * f));
  return `rgb(${c.join(",")})`;
};

/* each row lists the values from the diagonal to the last column */
const CLUSTER_SCORES = [
  [4.51, 3.42, 4.02, 3.44, 3.58, 3.06, 2.73, 1.42, 2.48, 1.0, 0.62, 0],
  [4.46, 3.1, 3.92, 3.6, 3.2, 2.98, 2.48, 2.2, 2.15, 1.48, 0.88],
  [4.48, 2.36, 3.7, 2.72, 2.86, 2.34, 2.66, 0, 0.32, 0],
  [4.24, 2.86, 2.44, 2.64, 1.0, 1.68, 0.95, 0.84, 1.13],
  [3.78, 2.84, 2.76, 1.97, 2.22, 0, 1.12, 0],
  [3.6, 2.58, 0.84, 1.44, 0, 0.62, 0],
  [3.5, 0.95, 1.6, 0, 1.05, 1.12],
  [3.1, 0, 0, 0, 0],
  [1.83, 0, 0, 0],
  [2.72, 0, 0],
  [1.12, 0],
  [1.68],
];

const PROTEIN_SCORES = [
  [66, 48, 27, 54, 25, 40, 44, 39, 52, 43, 52, 37, 55, 39, 51, 54, 36, 43, 49, 52, 39, 52, 52, 49, 42, 35, 30, 52, 30],
  [74, 14, 60, 13, 32, 70, 38, 63, 48, 52, 23, 66, 24, 64, 74, 39, 56, 62, 64, 50, 49, 65, 65, 63, 46, 12, 57, 15],
  [79, 6, 71, 43, 15, 23, 10, 9, 18, 60, 3, 56, 5, 3, 19, 19, 12, 3, 16, 20, 10, 14, 10, 12, 74, 10, 74],
  [95, 0, 48, 60, 46, 66, 67, 58, 23, 76, 25, 73, 74, 52, 59, 51, 78, 70, 59, 65, 54, 66, 52, 4, 68, 0],
  [83, 28, 17, 26, 12, 5, 22, 55, 2, 50, 2, 5, 15, 14, 24, 1, 2, 16, 13, 22, 5, 15, 73, 4, 75],
  [69, 25, 31, 36, 41, 33, 55, 38, 46, 42, 34, 38, 40, 20, 42, 53, 42, 33, 24, 37, 33, 45, 49, 38],
  [90, 43, 61, 46, 52, 18, 65, 22, 60, 78, 41, 52, 62, 60, 46, 46, 63, 68, 60, 43, 12, 51, 16],
  [85, 41, 69, 46, 27, 57, 29, 47, 42, 70, 38, 51, 47, 40, 43, 41, 45, 36, 25, 25, 40, 24],
  [80, 51, 67, 28, 73, 31, 75, 78, 40, 57, 59, 77, 52, 61, 78, 69, 59, 47, 17, 71, 17],
  [97, 41, 19, 78, 18, 60, 60, 80, 46, 47, 58, 59, 50, 51, 40, 50, 47, 2, 56, 1],
  [80, 30, 58, 36, 62, 68, 38, 49, 55, 69, 44, 60, 64, 67, 49, 37, 27, 63, 28],
  [65, 20, 57, 25, 19, 24, 30, 22, 24, 31, 35, 27, 24, 23, 19, 66, 29, 60],
  [93, 22, 76, 87, 63, 55, 60, 73, 59, 59, 74, 60, 59, 53, 2, 68, 4],
  [63, 28, 22, 23, 31, 28, 32, 31, 39, 30, 31, 26, 19, 65, 34, 59],
  [81, 78, 52, 60, 57, 79, 66, 61, 73, 63, 63, 48, 9, 73, 9],
  [99, 46, 57, 62, 76, 56, 59, 80, 68, 62, 52, 3, 69, 9],
  [84, 41, 40, 48, 57, 44, 41, 36, 38, 38, 12, 44, 15],
  [64, 52, 62, 57, 48, 60, 52, 62, 43, 19, 53, 16],
  [87, 63, 36, 48, 62, 67, 58, 41, 17, 50, 17],
  [92, 64, 66, 76, 71, 68, 48, 10, 80, 6],
  [87, 50, 51, 39, 60, 50, 13, 60, 12],
  [62, 60, 57, 50, 39, 25, 64, 23],
  [81, 68, 61, 48, 14, 68, 17],
  [80, 57, 39, 21, 63, 23],
  [77, 52, 9, 58, 5],
  [93, 8, 54, 8],
  [89, 14, 82],
  [80, 12],
  [89],
];

const CLUSTERS = CLUSTER_SCORES.map((_, i) => String(i));
const PROTEINS = [
  "DAPI", "CD31", "CD8", "CD20", "KI67", "CD3E", "SMACTIN", "PODOPLANIN", "CD68", "PANCK",
  "CD21", "CD4", "LYVE1", "CD45RO", "CD11C", "CD35", "ECAD", "CD107A", "CD34", "CD44",
  "HLA-DR", "FOXP3", "CD163", "COLLAGENIV", "VIMENTIN", "CD15", "CD45", "CD5", "CD1C",
];

const ADVANCE = {
  A: 0.684, C: 0.698, D: 0.771, E: 0.632, F: 0.575, G: 0.775, H: 0.751, I: 0.421, K: 0.693,
  L: 0.557, M: 0.843, N: 0.748, O: 0.787, P: 0.603, R: 0.695, S: 0.684, T: 0.616, V: 0.684,
  X: 0.685, Y: 0.615, "-": 0.454,
};
const labelLength = (s) => [...s].reduce((sum, ch) => sum + (ADVANCE[ch] || 0.636), 0) * 24;

function Heatmap({ id, scores, max, labels, plot, vertical, bar, ticks }) {
  const n = labels.length;
  const cw = plot.w / n, ch = plot.h / n;
  const edge = (start, size, i) => start + Math.round(size * i);
  const cells = [];
  for (let r = 0; r < n; r++) {
    for (let c = 0; c < n; c++) {
      const v = scores[Math.min(r, c)][Math.abs(c - r)];
      const x = edge(plot.x, cw, c), y = edge(plot.y, ch, r);
      cells.push(
        <rect key={`${r}-${c}`} x={x} y={y} width={edge(plot.x, cw, c + 1) - x}
          height={edge(plot.y, ch, r + 1) - y} fill={magma(v / max)} />
      );
    }
  }
  const bottom = plot.y + plot.h;
  return (
    <Chart viewBox="0 0 1286 1000">
      <defs>
        <linearGradient id={id} x1="0" y1="1" x2="0" y2="0">
          {MAGMA.map((c, i) => (
            <stop key={i} offset={i / 9} stopColor={`rgb(${c.join(",")})`} />
          ))}
        </linearGradient>
      </defs>
      <g shapeRendering="crispEdges">{cells}</g>
      {labels.map((l, i) => (
        <text key={l} x={plot.x - 2} y={plot.y + ch * (i + 0.5) + 8.7} textAnchor="end"
          textLength={labelLength(l)}>{l}</text>
      ))}
      {labels.map((l, i) => {
        const cx = plot.x + cw * (i + 0.5);
        return vertical ? (
          <text key={l} transform={`translate(${cx - 13.7} ${bottom + 14}) rotate(90)`}
            textLength={labelLength(l)}>{l}</text>
        ) : (
          <text key={l} x={cx} y={bottom + 26.3} textAnchor="middle">{l}</text>
        );
      })}
      <rect x={bar.x} y={bar.y} width="60" height={bar.h} fill={`url(#${id})`} />
      {ticks.map(([l, y]) => (
        <text key={l} x={bar.x + 65.5} y={y + 8.7}>{l}</text>
      ))}
    </Chart>
  );
}

const FLIP = "matrix(1 0 0 -1 0 850)";
const MODE_ICONS = [
  [
    [1000, "m500 450c-83 0-150-67-150-150 0-83 67-150 150-150 83 0 150 67 150 150 0 83-67 150-150 150z m400 150h-120c-16 0-34 13-39 29l-31 93c-6 15-23 28-40 28h-340c-16 0-34-13-39-28l-31-94c-6-15-23-28-40-28h-120c-55 0-100-45-100-100v-450c0-55 45-100 100-100h800c55 0 100 45 100 100v450c0 55-45 100-100 100z m-400-550c-138 0-250 112-250 250 0 138 112 250 250 250 138 0 250-112 250-250 0-138-112-250-250-250z m365 380c-19 0-35 16-35 35 0 19 16 35 35 35 19 0 35-16 35-35 0-19-16-35-35-35z"],
  ],
  [
    [1000, "m1000-25l-250 251c40 63 63 138 63 218 0 224-182 406-407 406-224 0-406-182-406-406s183-406 407-406c80 0 155 22 218 62l250-250 125 125z m-812 250l0 438 437 0 0-438-437 0z m62 375l313 0 0-312-313 0 0 312z", true],
    [1000, "m1000 350l-187 188 0-125-250 0 0 250 125 0-188 187-187-187 125 0 0-250-250 0 0 125-188-188 186-187 0 125 252 0 0-250-125 0 187-188 188 188-125 0 0 250 250 0 0-126 187 188z"],
  ],
  [
    [875, "m1 787l0-875 875 0 0 875-875 0z m687-500l-187 0 0-187-125 0 0 187-188 0 0 125 188 0 0 187 125 0 0-187 187 0 0-125z"],
    [875, "m0 788l0-876 875 0 0 876-875 0z m688-500l-500 0 0 125 500 0 0-125z"],
    [1000, "m250 850l-187 0-63 0 0-62 0-188 63 0 0 188 187 0 0 62z m688 0l-188 0 0-62 188 0 0-188 62 0 0 188 0 62-62 0z m-875-938l0 188-63 0 0-188 0-62 63 0 187 0 0 62-187 0z m875 188l0-188-188 0 0-62 188 0 62 0 0 62 0 188-62 0z m-125 188l-1 0-93-94-156 156 156 156 92-93 2 0 0 250-250 0 0-2 93-92-156-156-156 156 94 92 0 2-250 0 0-250 0 0 93 93 157-156-157-156-93 94 0 0 0-250 250 0 0 0-94 93 156 157 156-157-93-93 0 0 250 0 0 250z"],
    [928.6, "m786 296v-267q0-15-11-26t-25-10h-214v214h-143v-214h-214q-15 0-25 10t-11 26v267q0 1 0 2t0 2l321 264 321-264q1-1 1-4z m124 39l-34-41q-5-5-12-6h-2q-7 0-12 3l-386 322-386-322q-7-4-13-4-7 2-12 7l-35 41q-4 5-3 13t6 12l401 334q18 15 42 15t43-15l136-114v109q0 8 5 13t13 5h107q8 0 13-5t5-13v-227l122-102q5-5 6-12t-4-13z"],
  ],
];

function PlotModeBar() {
  return (
    <ModeBar>
      {MODE_ICONS.map((group, g) => (
        <ModeGroup key={g}>
          {group.map(([w, d, active]) => (
            <ModeIcon key={d} viewBox={`0 0 ${w} 1000`} $active={active}>
              <path d={d} transform={FLIP} />
            </ModeIcon>
          ))}
        </ModeGroup>
      ))}
    </ModeBar>
  );
}

function ScoreCard({ title, children }) {
  return (
    <Card $width={1292} $height={1300}>
      <ScoreHeader>
        <ScoreTitle>{title}</ScoreTitle>
        <Button $tone="light" $width={245} $height={64}>Compute Scores</Button>
        <Button $tone="light" $width={74} $offset={16} $lift={5} aria-label="Settings">
          <FaCog size={21} />
        </Button>
      </ScoreHeader>
      <PlotModeBar />
      {children}
    </Card>
  );
}

export default function App() {
  return (
    <Page>
      <GlobalStyle />
      <Shell>
        <TabBar>
          <Tab $width={168}>Analysis</Tab>
          <Tab $width={210} $active>Spatial Data</Tab>
          <Tab $width={141}>ASCT-B</Tab>
        </TabBar>
        <Card $width={2645} $height={1094}>
          <SpatialTitle>Spatial Data</SpatialTitle>
          <Controls>
            <Select $width={600}>
              <SelectText>CODEX</SelectText>
              <ClearIcon viewBox="0 0 20 20">
                <path d="M1.5 1.5 L18.5 18.5 M18.5 1.5 L1.5 18.5" />
              </ClearIcon>
              <Caret />
            </Select>
            <Button $tone="secondary" $width={142}>Upload</Button>
            <Select $width={833} $offset={16}>
              <SelectText $placeholder>Leave empty for cluster view</SelectText>
              <Caret />
            </Select>
            <Button $tone="primary" $width={224}>Generate Tile</Button>
            <Button $tone="primary" $width={235} $offset={16}>Download Tile</Button>
          </Controls>
          <TissueImage />
        </Card>
        <CardRow>
          <ScoreCard title="Cluster Co-Localization Score">
            <Heatmap id="cluster-scale" scores={CLUSTER_SCORES} max={4.51} labels={CLUSTERS}
              plot={{ x: 200, y: 152, w: 680, h: 640 }} bar={{ x: 914, y: 172, h: 600 }}
              ticks={[["4", 239.5], ["3", 372.5], ["2", 505.5], ["1", 638.5], ["0", 771.5]]} />
          </ScoreCard>
          <ScoreCard title="Protein Co-Localization Score">
            <Heatmap id="protein-scale" scores={PROTEIN_SCORES} max={100} labels={PROTEINS} vertical
              plot={{ x: 228, y: 152, w: 594, h: 600 }} bar={{ x: 854, y: 172, h: 560 }}
              ticks={[["200k", 239.3], ["150k", 310.3], ["100k", 381.5], ["50k", 452.6], ["0", 523.6], ["−50k", 594.8], ["−100k", 666]]} />
          </ScoreCard>
        </CardRow>
      </Shell>
    </Page>
  );
}
